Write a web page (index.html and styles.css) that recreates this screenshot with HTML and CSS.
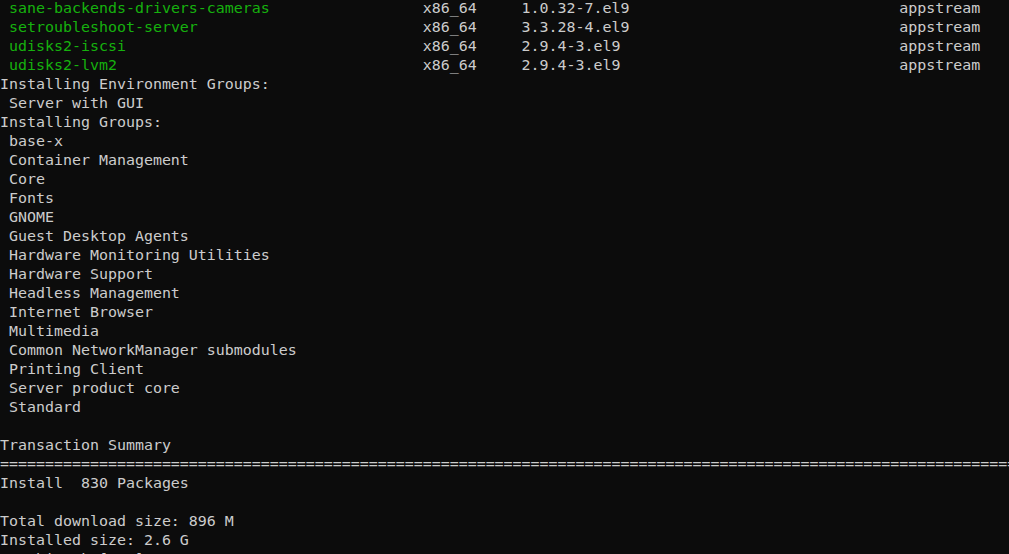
FILE: index.html
```html
<!DOCTYPE html>
<html>
<head>
<meta charset="utf-8">
<link rel="stylesheet" href="styles.css">
</head>
<body>
<pre class="term"> <span class="pkg">sane-backends-drivers-cameras</span>                 x86_64     1.0.32-7.el9                              appstream
 <span class="pkg">setroubleshoot-server</span>                         x86_64     3.3.28-4.el9                              appstream
 <span class="pkg">udisks2-iscsi</span>                                 x86_64     2.9.4-3.el9                               appstream
 <span class="pkg">udisks2-lvm2</span>                                  x86_64     2.9.4-3.el9                               appstream
Installing Environment Groups:
 Server with GUI
Installing Groups:
 base-x
 Container Management
 Core
 Fonts
 GNOME
 Guest Desktop Agents
 Hardware Monitoring Utilities
 Hardware Support
 Headless Management
 Internet Browser
 Multimedia
 Common NetworkManager submodules
 Printing Client
 Server product core
 Standard

Transaction Summary
========================================================================================================================
Install  830 Packages

Total download size: 896 M
Installed size: 2.6 G
Is this ok [y/N]:</pre>
</body>
</html>
```

FILE: styles.css
```css
html, body {
  margin: 0;
  padding: 0;
  background: #0c0c0c;
  height: 100%;
  overflow: hidden;
}

.term {
  margin: -1px 0 0 0;
  padding: 0;
  font-family: "DejaVu Sans Mono", monospace;
  font-size: 14.95px;
  line-height: 19px;
  color: #cccccc;
  white-space: pre;
  overflow: hidden;
}

.pkg {
  color: #16b10e;
}
```
